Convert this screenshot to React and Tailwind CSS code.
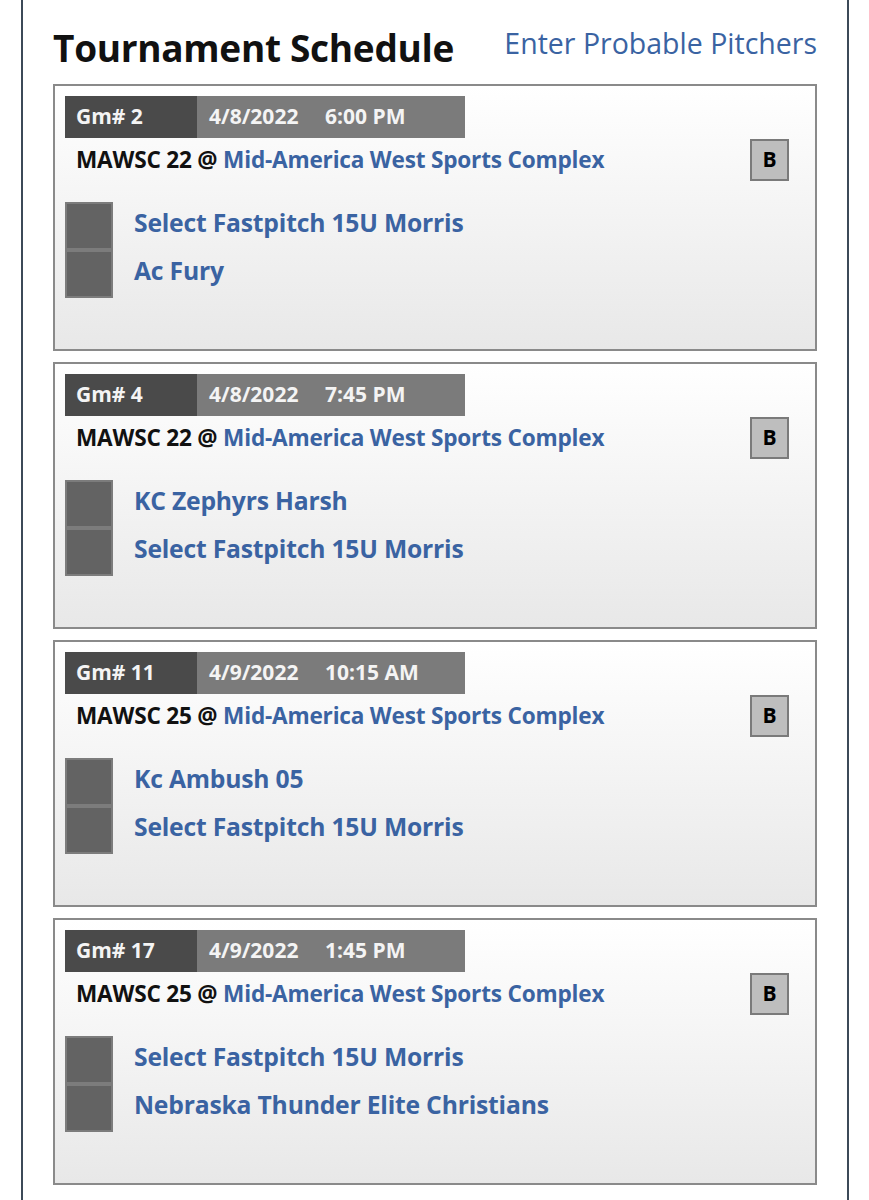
const games = [
  { gm: "2", date: "4/8/2022", time: "6:00 PM", field: "MAWSC 22", teams: ["Select Fastpitch 15U Morris", "Ac Fury"] },
  { gm: "4", date: "4/8/2022", time: "7:45 PM", field: "MAWSC 22", teams: ["KC Zephyrs Harsh", "Select Fastpitch 15U Morris"] },
  { gm: "11", date: "4/9/2022", time: "10:15 AM", field: "MAWSC 25", teams: ["Kc Ambush 05", "Select Fastpitch 15U Morris"] },
  { gm: "17", date: "4/9/2022", time: "1:45 PM", field: "MAWSC 25", teams: ["Select Fastpitch 15U Morris", "Nebraska Thunder Elite Christians"] },
];

const GameCard = ({ game }) => {
  return (
    <div className="h-[267px] border-2 border-[#8a8a8a] bg-gradient-to-b from-white to-[#e8e8e8] pt-[10px] pl-[10px] pr-[26px]">
      {/* barra de juego */}
      <div className="flex h-[42px] w-[400px] text-[21px] font-bold text-[#f4f4f4]">
        <div className="flex w-[132px] items-center bg-[#4a4a4a] pl-[11px]">Gm# {game.gm}</div>
        <div className="flex flex-1 items-center bg-[#7b7b7b] pl-[12px]">
          <span className="w-[116px]">{game.date}</span>
          <span>{game.time}</span>
        </div>
      </div>

      <div className="flex h-[43px] items-center justify-between pl-[11px]">
        <p className="text-[22.6px] font-bold tracking-[-0.2px] text-[#111]">
          {game.field} @ <span className="text-[#3a63a2]">Mid-America West Sports Complex</span>
        </p>
        <div className="flex h-[42px] w-[39px] items-center justify-center border-2 border-[#7a7a7a] bg-[#bebebe] text-[21px] font-bold text-black">
          B
        </div>
      </div>

      <div className="mt-[21px]">
        {game.teams.map((t, i) => (
          <div key={i} className="flex h-[48px] items-center">
            <div className="h-[48px] w-[48px] border-2 border-[#7c7c7c] bg-[#636363]"></div>
            <span className="ml-[21px] -mt-[6px] text-[24.7px] font-bold tracking-[-0.2px] text-[#3a63a2]">{t}</span>
          </div>
        ))}
      </div>
    </div>
  );
};

export default function App() {
  return (
    <div className="min-h-[1200px] w-[869px] bg-white pl-[21px]" style={{ fontFamily: '"Open Sans", "Noto Sans", sans-serif' }}>
      <div className="min-h-[1200px] w-[828px] border-x-2 border-[#3c4a58] pl-[30px] pr-[30px]">
        <div className="flex h-[60px] items-center justify-between pt-[36px]">
          <h1 className="text-[37px] font-bold tracking-[-0.3px] text-[#111]">Tournament Schedule</h1>
          <a className="mb-[10px] text-[28.5px] text-[#3a63a2]">Enter Probable Pitchers</a>
        </div>
        <div className="mt-[24px] flex flex-col gap-[11px] pb-[14px]">
          {games.map((g) => (
            <GameCard key={g.gm} game={g} />
          ))}
        </div>
      </div>
    </div>
  );
}
